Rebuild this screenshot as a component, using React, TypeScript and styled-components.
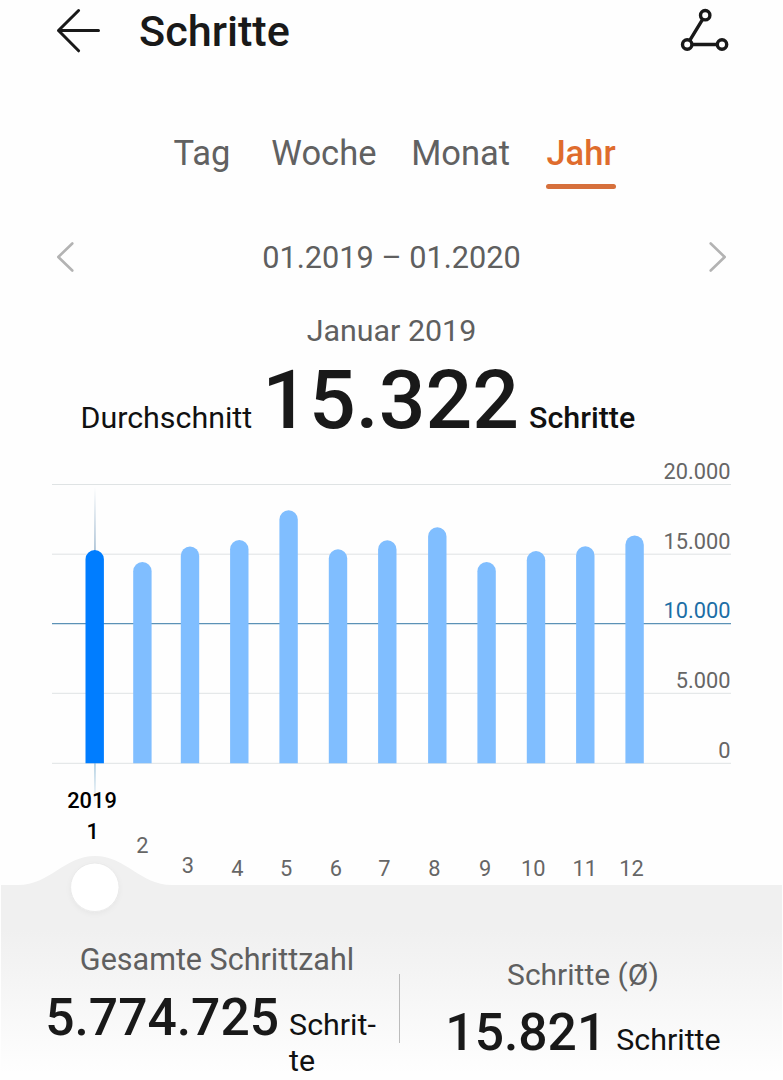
import React from "react";
import styled, { createGlobalStyle } from "styled-components";

const GlobalStyle = createGlobalStyle`
  * { box-sizing: border-box; }
  html, body { margin: 0; padding: 0; background: #fefefe; }
  body { font-family: Roboto, "Noto Sans", sans-serif; color: #191919; overflow: hidden; }
`;

const Screen = styled.main`
  width: 783px;
  height: 1080px;
  display: flex;
  flex-direction: column;
  overflow: hidden;
  background: #fefefe;
`;

const Header = styled.header`
  display: flex;
  align-items: center;
  height: 64px;
  flex: none;
  padding: 0 54px 0 55px;
`;

const Title = styled.h1`
  flex: 1;
  margin: 0 0 0 37px;
  font-size: 43.2px;
  line-height: 64px;
  font-weight: 500;
`;

const IconButton = styled.button`
  display: flex;
  padding: 0;
  border: 0;
  background: none;
  color: #191919;
`;

const Tabs = styled.nav`
  display: flex;
  flex: none;
  height: 56px;
  margin-top: 69px;
  padding-left: 173.5px;
`;

const Tab = styled.a<{ $active?: boolean; $gap: number }>`
  display: flex;
  flex-direction: column;
  justify-content: space-between;
  margin-right: ${(p) => p.$gap}px;
  font-size: 34.5px;
  line-height: 41px;
  font-weight: ${(p) => (p.$active ? 500 : 400)};
  color: ${(p) => (p.$active ? "#df6c2d" : "#616161")};

  &::after {
    content: "";
    height: 4.6px;
    border-radius: 3px;
    background: ${(p) => (p.$active ? "#d6703c" : "transparent")};
  }
`;

const RangeBar = styled.div`
  display: flex;
  flex: none;
  align-items: center;
  justify-content: space-between;
  height: 40px;
  margin-top: 48px;
  padding: 0 55px;
`;

const Caption = styled.span<{ $size?: number }>`
  font-size: ${(p) => p.$size ?? 30.3}px;
  line-height: 36px;
  color: #5f5f5f;
  white-space: nowrap;
`;

const RangeLabel = styled(Caption)`
  padding-top: 2px;
`;

const MonthRow = styled.div`
  display: flex;
  flex: none;
  justify-content: center;
  margin-top: 36px;
`;

const Average = styled.div`
  display: flex;
  flex: none;
  align-items: baseline;
  height: 98px;
  margin-top: 3px;
  padding-left: 80.5px;
  line-height: 96px;
`;

const Unit = styled.span<{ $strong?: boolean }>`
  font-size: 30.4px;
  font-weight: ${(p) => (p.$strong ? 500 : 400)};
  color: #111;
`;

const BigNumber = styled.strong`
  margin: 0 10px 0 10px;
  font-size: 82.3px;
  font-weight: 500;
`;

const Chart = styled.svg`
  display: block;
  flex: none;
  width: 783px;
  height: 480px;
  font-family: Roboto, "Noto Sans", sans-serif;
  font-size: 21.8px;
`;

const Summary = styled.section`
  display: flex;
  flex: none;
  height: 150px;
  margin: 0 1px;
  background: linear-gradient(#f0f0f0, #f8f8f8 55%, #fefefe 95%);
`;

const Stat = styled.div<{ $top: number; $width: number; $left: number }>`
  display: flex;
  flex: none;
  flex-direction: column;
  align-items: center;
  width: ${(p) => p.$width}px;
  margin-left: ${(p) => p.$left}px;
  padding-top: ${(p) => p.$top}px;
`;

const StatValue = styled.div<{ $inset?: number }>`
  display: flex;
  align-items: baseline;
  margin: 10px ${(p) => p.$inset ?? 0}px 0 0;
  line-height: 36px;
`;

const StatNumber = styled.strong`
  margin-right: 10px;
  font-size: 51.6px;
  line-height: 60px;
  font-weight: 500;
`;

const Divider = styled.div`
  flex: none;
  width: 1px;
  height: 69px;
  margin-top: 44px;
  background: #bcbcbc;
`;

const bars = [
  { x: 94.7, top: 550 }, { x: 142.4, top: 562 }, { x: 190, top: 546.5 },
  { x: 239.3, top: 540 }, { x: 288.6, top: 510.3 }, { x: 338, top: 549.3 },
  { x: 387.3, top: 540.3 }, { x: 437.3, top: 527.3 }, { x: 486.6, top: 562 },
  { x: 536, top: 551 }, { x: 585.3, top: 546.3 }, { x: 634.6, top: 535.6 },
];

const gridLines = [
  { y: 484.5, label: "20.000" }, { y: 554.2, label: "15.000" },
  { y: 623.7, label: "10.000" }, { y: 693.3, label: "5.000" }, { y: 763.3, label: "0" },
];

const months = [
  { x: 92.7, y: 839 }, { x: 142.4, y: 852.5 }, { x: 188, y: 873 },
  { x: 237.4, y: 875.5 }, { x: 286.2, y: 875.5 }, { x: 336, y: 875.5 },
  { x: 384.5, y: 875.5 }, { x: 434.5, y: 875.5 }, { x: 485.2, y: 875.5 },
  { x: 533.3, y: 875.5 }, { x: 584.7, y: 875.5 }, { x: 631.6, y: 875.5 },
];

const barPath = (x: number, top: number) =>
  `M${x - 9.2} 763.3V${top + 9.2}a9.2 9.2 0 0 1 18.4 0V763.3Z`;

function StepsChart() {
  return (
    <Chart viewBox="0 450 783 480">
      <defs>
        <linearGradient id="marker" gradientUnits="userSpaceOnUse" x1="0" y1="487" x2="0" y2="550">
          <stop offset="0" stopColor="#9fb9cf" stopOpacity="0" />
          <stop offset="1" stopColor="#9fb9cf" />
        </linearGradient>
        <linearGradient id="markerEnd" gradientUnits="userSpaceOnUse" x1="0" y1="763" x2="0" y2="806">
          <stop offset="0" stopColor="#a3c6dc" />
          <stop offset="1" stopColor="#a3c6dc" stopOpacity="0" />
        </linearGradient>
        <filter id="knobShadow" x="-30%" y="-30%" width="160%" height="160%">
          <feDropShadow dx="0" dy="2" stdDeviation="2.5" floodOpacity="0.04" />
        </filter>
      </defs>

      {gridLines.map(({ y, label }, i) => (
        <g key={label}>
          <path d={`M52 ${y}H731`} stroke={i === 2 ? "#5c92b6" : "#dfe3e4"} strokeWidth={i === 2 ? 1.3 : 1} />
          <text x="730.6" y={y - 5.4} textAnchor="end" fill={i === 2 ? "#1c6ea6" : "#666"}>{label}</text>
        </g>
      ))}

      <rect x="94.2" y="487" width="1.5" height="64" fill="url(#marker)" />
      <rect x="94.2" y="763" width="1.5" height="43" fill="url(#markerEnd)" />
      {bars.map((bar, i) => (
        <path key={bar.x} d={barPath(bar.x, bar.top)} fill={i === 0 ? "#007dff" : "#80beff"} />
      ))}

      <path d="M1 930V885H18C50 885 64 856 95 856S140 885 172 885H782V930Z" fill="#f0f0f0" />
      <circle cx="94.8" cy="887.3" r="24.2" fill="#fff" stroke="#e5e5e5" strokeWidth="0.7" filter="url(#knobShadow)" />

      <text x="92" y="807.5" textAnchor="middle" fontWeight="500" fill="#000">2019</text>
      {months.map((m, i) => (
        <text key={m.x} x={m.x} y={m.y} textAnchor="middle" fontWeight={i === 0 ? 500 : 400} fill={i === 0 ? "#000" : "#666"}>
          {i + 1}
        </text>
      ))}
    </Chart>
  );
}

export default function App() {
  return (
    <>
      <GlobalStyle />
      <Screen>
        <Header>
          <IconButton aria-label="Zurück">
            <svg width="47" height="48" viewBox="55 8 47 48" fill="none" stroke="currentColor" strokeWidth="3" strokeLinecap="round" strokeLinejoin="round">
              <path d="M98.5 30.5H58.5M78.6 10.5L58.5 30.5L78.6 50.8" />
            </svg>
          </IconButton>
          <Title>Schritte</Title>
          <IconButton aria-label="Verlauf">
            <svg width="50" height="48" viewBox="679 8 50 48" fill="none" stroke="currentColor" strokeWidth="3.4">
              <circle cx="705.2" cy="15.2" r="4.7" />
              <circle cx="687.2" cy="44.5" r="4.7" />
              <circle cx="722" cy="44.5" r="4.7" />
              <path d="M702.6 19.4L689.8 40.4M692 44.5H717.2" />
            </svg>
          </IconButton>
        </Header>

        <Tabs>
          <Tab $gap={41}>Tag</Tab>
          <Tab $gap={34.8}>Woche</Tab>
          <Tab $gap={36.3}>Monat</Tab>
          <Tab $gap={0} $active>Jahr</Tab>
        </Tabs>

        <RangeBar>
          <IconButton aria-label="Früher">
            <svg width="20" height="32" viewBox="0 0 20 32" fill="none" stroke="#b3b3b3" strokeWidth="2.6" strokeLinecap="round" strokeLinejoin="round">
              <path d="M17.3 2.5L3.3 16L17.3 29.5" />
            </svg>
          </IconButton>
          <RangeLabel $size={30.7}>01.2019 – 01.2020</RangeLabel>
          <IconButton aria-label="Später">
            <svg width="20" height="32" viewBox="0 0 20 32" fill="none" stroke="#b3b3b3" strokeWidth="2.6" strokeLinecap="round" strokeLinejoin="round">
              <path d="M2.7 2.5L16.7 16L2.7 29.5" />
            </svg>
          </IconButton>
        </RangeBar>

        <MonthRow>
          <Caption $size={30.4}>Januar 2019</Caption>
        </MonthRow>

        <Average>
          <Unit>Durchschnitt</Unit>
          <BigNumber>15.322</BigNumber>
          <Unit $strong>Schritte</Unit>
        </Average>

        <StepsChart />

        <Summary>
          <Stat $left={34} $width={364} $top={12}>
            <Caption $size={30.5}>Gesamte Schrittzahl</Caption>
            <StatValue $inset={13}>
              <StatNumber>5.774.725</StatNumber>
              <Unit>Schrit-<br />te</Unit>
            </StatValue>
          </Stat>
          <Divider />
          <Stat $left={20} $width={326} $top={27}>
            <Caption $size={30}>Schritte (Ø)</Caption>
            <StatValue>
              <StatNumber>15.821</StatNumber>
              <Unit>Schritte</Unit>
            </StatValue>
          </Stat>
        </Summary>
      </Screen>
    </>
  );
}
